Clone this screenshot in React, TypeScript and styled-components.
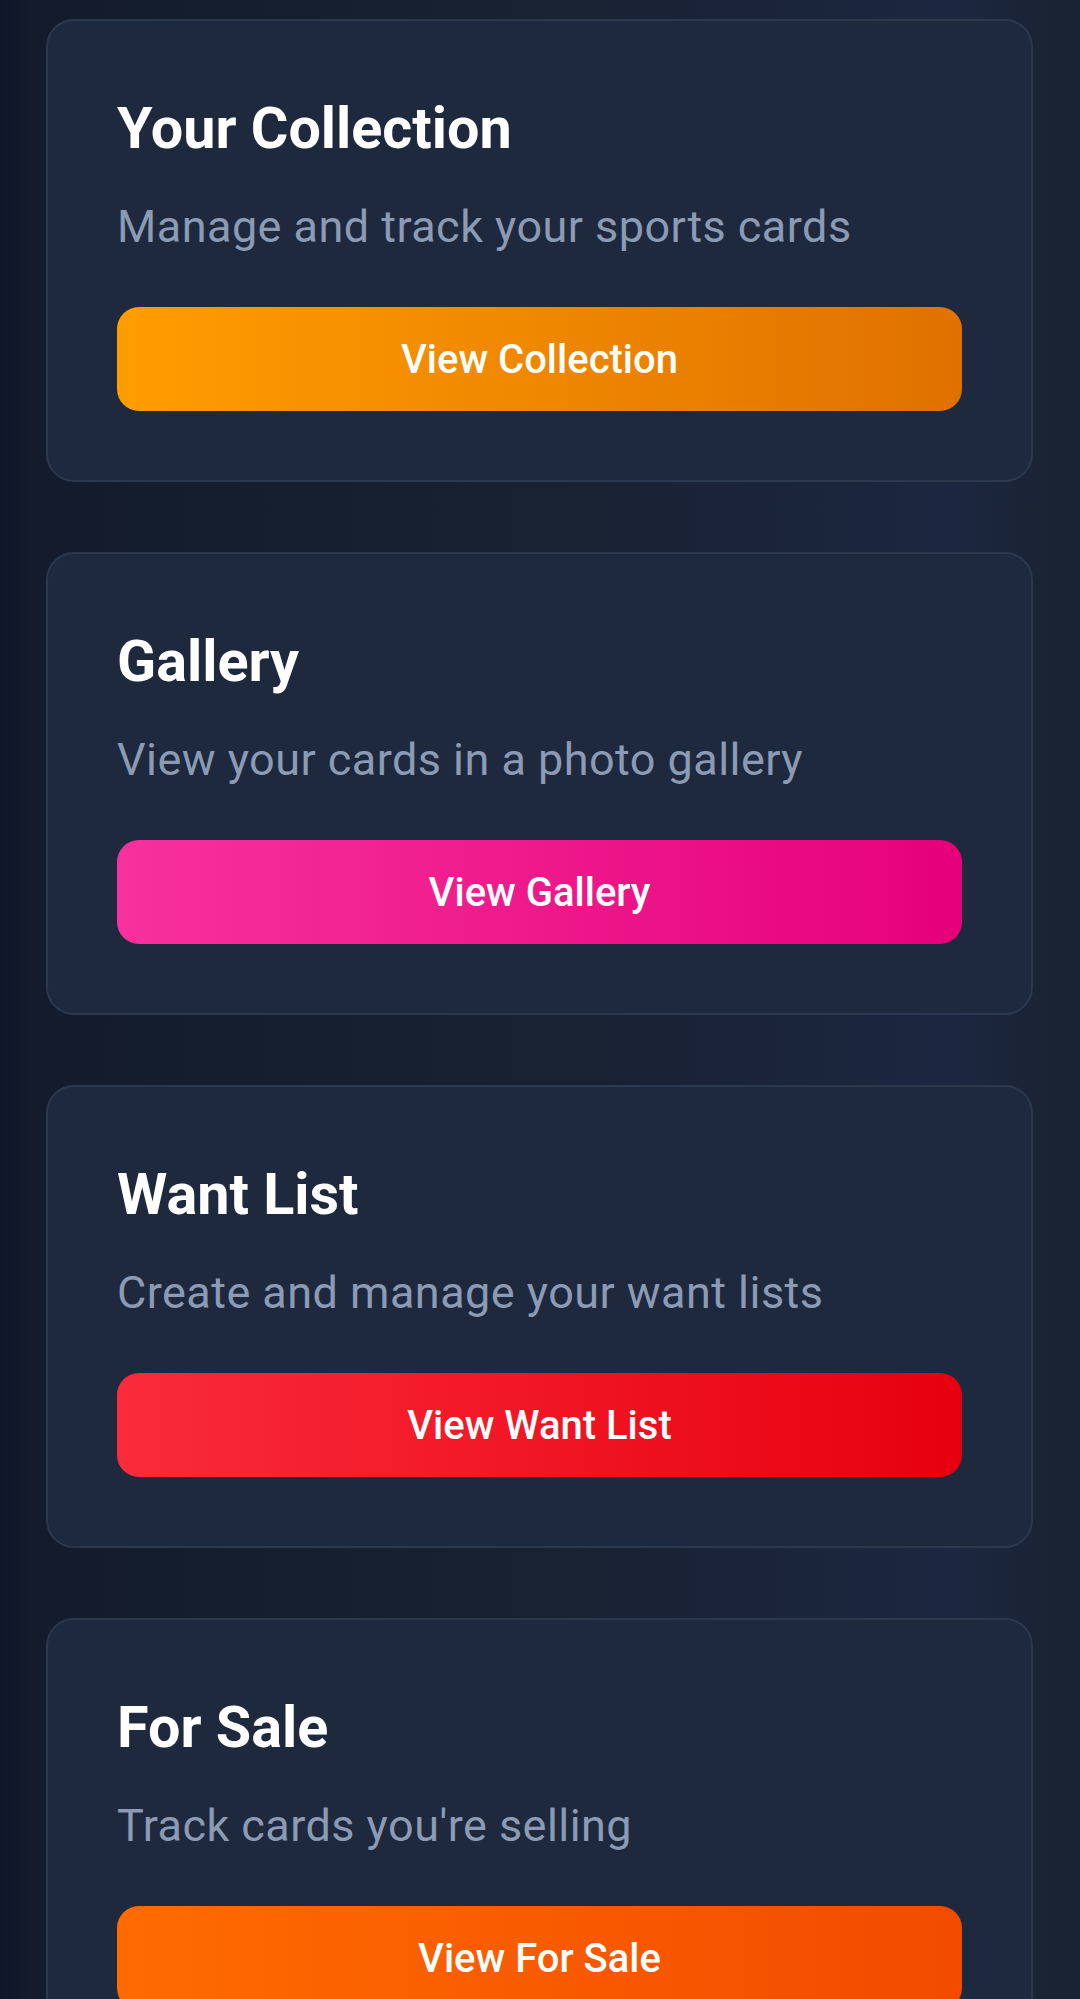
import styled, { createGlobalStyle } from "styled-components";

const GlobalStyle = createGlobalStyle`
  html, body {
    margin: 0;
    padding: 0;
  }

  body {
    min-height: 1999px;
    font-family: Roboto, "Liberation Sans", Arial, sans-serif;
    background: linear-gradient(
      90deg,
      #0f1629 0%,
      #131b2d 3%,
      #151e2f 20%,
      #192233 55%,
      #1c2640 88%,
      #1b2435 96%,
      #1a2333 100%
    );
  }
`;

const Page = styled.main`
  display: flex;
  flex-direction: column;
  gap: 70px;
  padding: 19px 47px 40px 46px;
`;

const Card = styled.section`
  display: flex;
  flex-direction: column;
  padding: 69px 69px;
  background: #1e293d;
  border: 2px solid #2c384e;
  border-radius: 28px;
`;

const Title = styled.h2`
  margin: 0 0 31px;
  font-size: 57.5px;
  line-height: 78px;
  font-weight: 700;
  color: #ffffff;
`;

const Subtitle = styled.p`
  margin: 0 0 52px;
  font-size: 45px;
  line-height: 56px;
  letter-spacing: 0.45px;
  font-weight: 400;
  color: #8b9bb4;
`;

const ActionButton = styled.button<{ $from: string; $to: string }>`
  height: 104px;
  border: none;
  border-radius: 22px;
  font-family: inherit;
  font-size: 40px;
  font-weight: 500;
  color: #ffffff;
  cursor: pointer;
  background: linear-gradient(90deg, ${(p) => p.$from}, ${(p) => p.$to});
`;

const sections = [
  {
    title: "Your Collection",
    text: "Manage and track your sports cards",
    action: "View Collection",
    from: "#ff9d00",
    to: "#e07100",
  },
  {
    title: "Gallery",
    text: "View your cards in a photo gallery",
    action: "View Gallery",
    from: "#f7319d",
    to: "#e6007a",
  },
  {
    title: "Want List",
    text: "Create and manage your want lists",
    action: "View Want List",
    from: "#fa2b3a",
    to: "#e7000f",
  },
  {
    title: "For Sale",
    text: "Track cards you're selling",
    action: "View For Sale",
    from: "#ff6b00",
    to: "#f24b00",
  },
];

const App = () => {
  return (
    <>
      <GlobalStyle />
      <Page>
        {sections.map((s) => (
          <Card key={s.title}>
            <Title>{s.title}</Title>
            <Subtitle>{s.text}</Subtitle>
            <ActionButton $from={s.from} $to={s.to}>
              {s.action}
            </ActionButton>
          </Card>
        ))}
      </Page>
    </>
  );
};

export default App;
